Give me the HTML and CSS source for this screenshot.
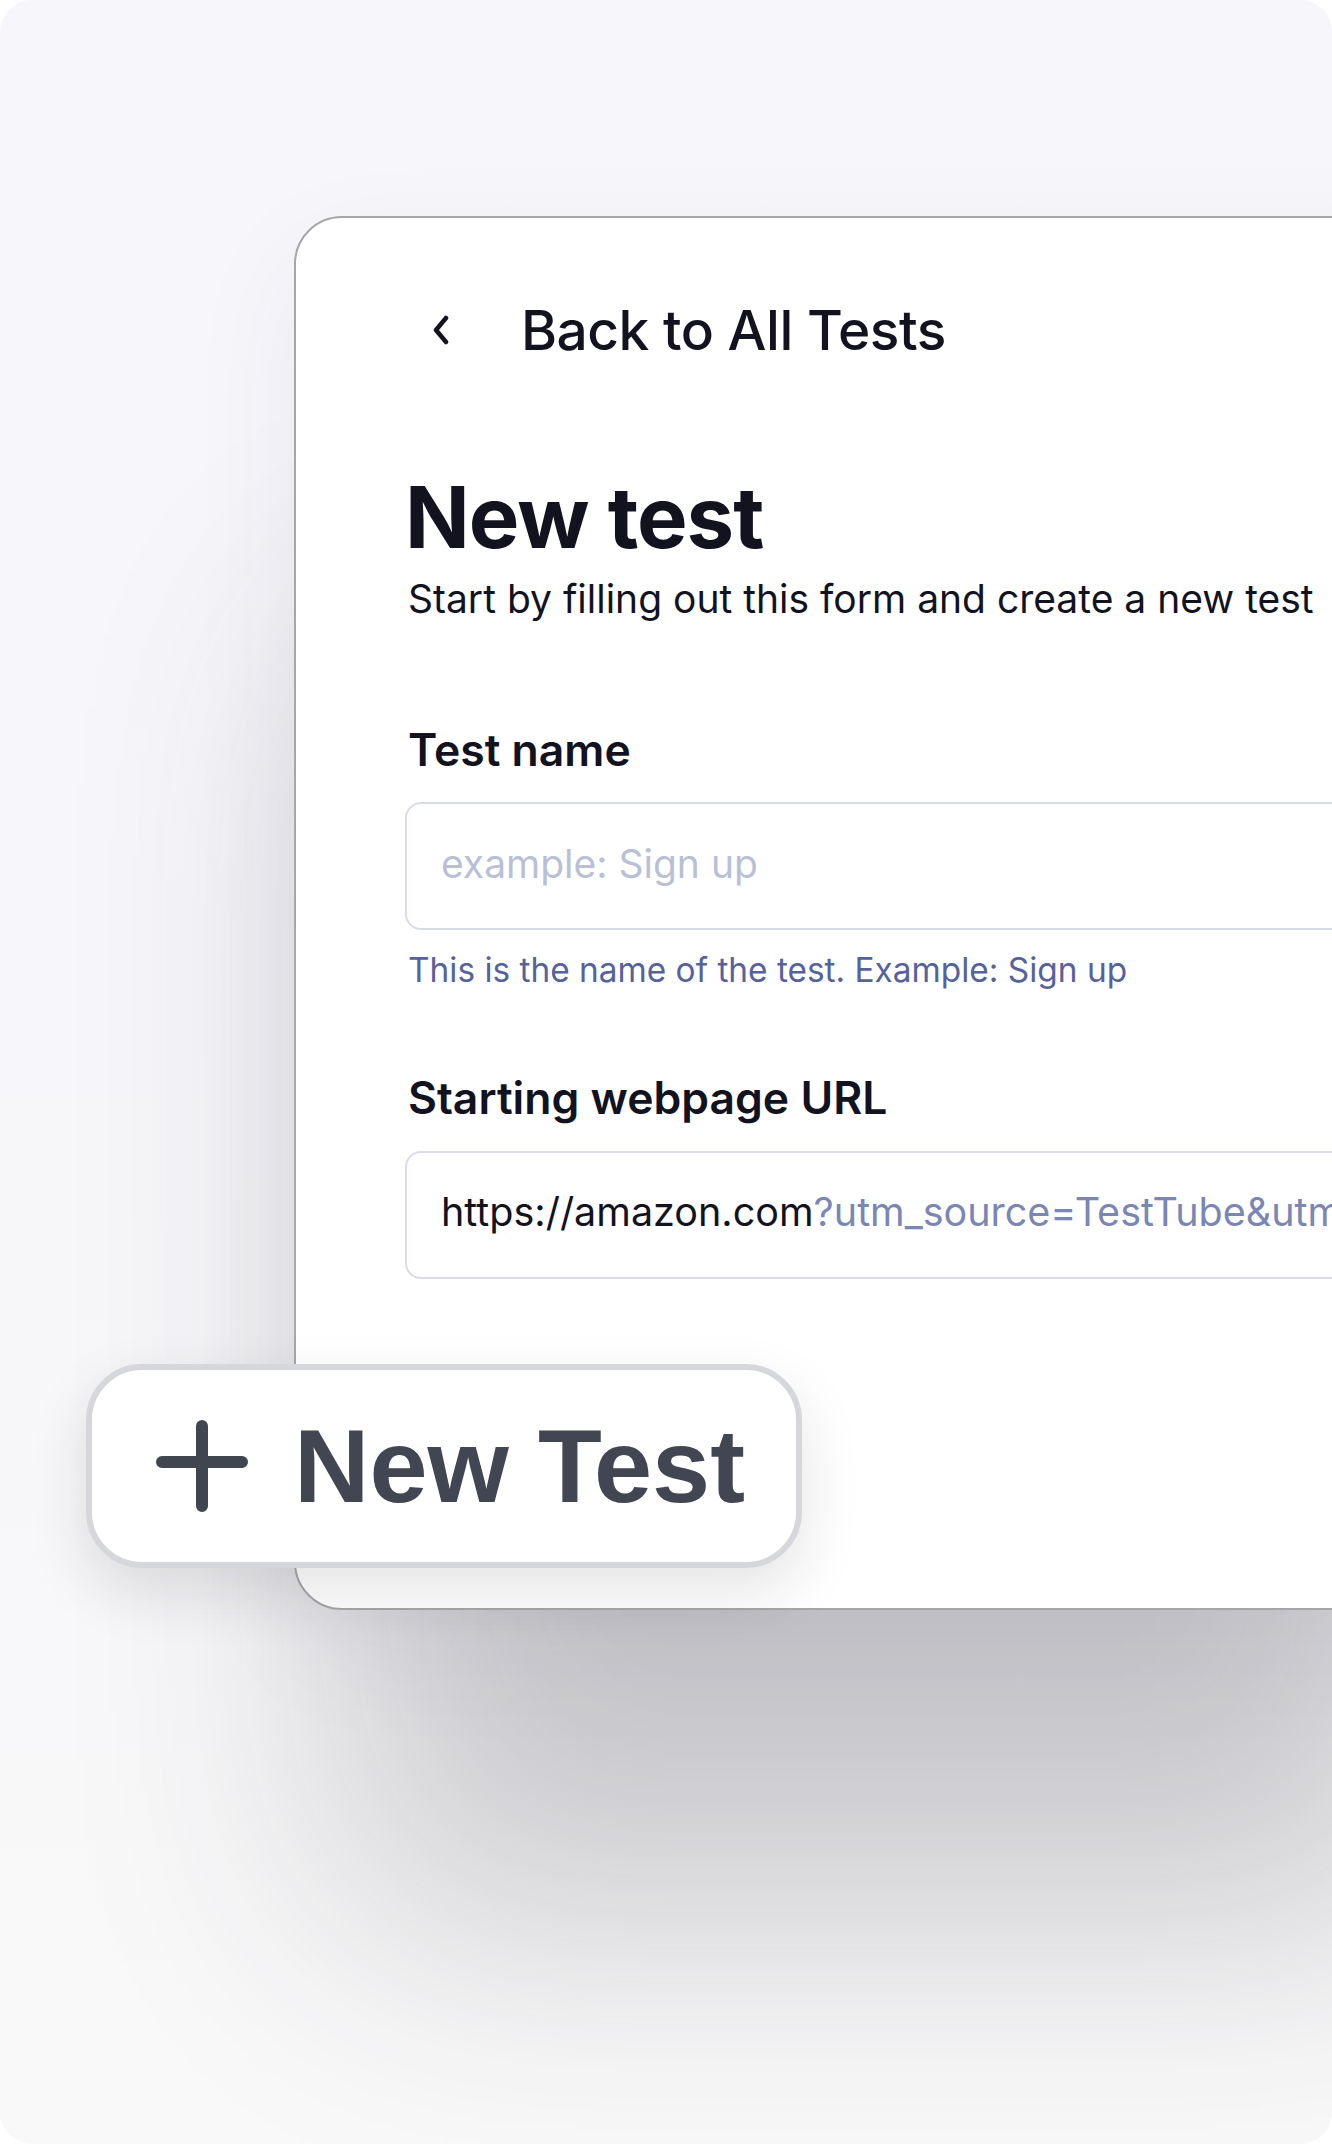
FILE: index.html
```html
<!DOCTYPE html>
<html lang="en">
<head>
<meta charset="UTF-8">
<meta name="viewport" content="width=device-width, initial-scale=1.0">
<title>New test</title>
<link rel="stylesheet" href="styles.css">
</head>
<body>
  <div class="page">
    <div class="window">
      <a class="back-link" href="#">
        <svg class="chevron" width="18" height="30" viewBox="0 0 18 30">
          <path d="M14 3 L4 15 L14 27" fill="none" stroke="#12131f" stroke-width="4.5" stroke-linecap="round" stroke-linejoin="round"/>
        </svg>
        <span>Back to All Tests</span>
      </a>

      <div class="heading">
        <h1>New test</h1>
        <p class="subtitle">Start by filling out this form and create a new test</p>
      </div>

      <form class="test-form">
        <div class="field">
          <label for="test-name">Test name</label>
          <div class="input-box">
            <input id="test-name" type="text" placeholder="example: Sign up">
          </div>
          <div class="hint">This is the name of the test. Example: Sign up</div>
        </div>

        <div class="field">
          <label>Starting webpage URL</label>
          <div class="input-box">
            <span class="url">https://amazon.com<span class="query">?utm_source=TestTube&amp;utm_medium=referral</span></span>
          </div>
        </div>
      </form>
    </div>

    <button class="new-test-btn" type="button">
      <svg class="plus" width="92" height="92" viewBox="0 0 92 92">
        <path d="M46 6 V86 M6 42 H86" fill="none" stroke="#414550" stroke-width="12" stroke-linecap="round"/>
      </svg>
      <span>New Test</span>
    </button>
  </div>
</body>
</html>
```

FILE: styles.css
```css
  body {
    margin: 0;
    padding: 0;
    background: #ffffff;
    font-family: Inter, 'Noto Sans', sans-serif;
    color: #12131f;
  }

  .page {
    position: relative;
    width: 1332px;
    height: 2144px;
    border-radius: 32px;
    overflow: hidden;
    background: linear-gradient(180deg, #f6f6fb 0%, #f7f7fa 60%, #f9f9f9 100%);
    padding-top: 216px;
    padding-left: 294px;
    box-sizing: border-box;
  }

  .window {
    width: 1200px;
    height: 1394px;
    box-sizing: border-box;
    background: #ffffff;
    border: 2px solid #a6a6a8;
    border-radius: 48px;
    padding: 72px 0 0 112px;
    box-shadow: 0 360px 320px -60px rgba(40, 40, 55, 0.24),
                0 40px 120px rgba(40, 40, 60, 0.06);
  }

  .back-link {
    display: flex;
    align-items: center;
    gap: 71px;
    padding-left: 24px;
    height: 80px;
    text-decoration: none;
    color: #12131f;
    font-size: 55px;
    font-weight: 500;
    letter-spacing: -0.5px;
  }

  .heading {
    margin-top: 105px;
  }

  .heading h1 {
    margin: 0 0 0 -3px;
    font-size: 85px;
    font-weight: 700;
    line-height: 1;
    letter-spacing: -1px;
  }

  .subtitle {
    margin: 16px 0 0;
    font-size: 39px;
    line-height: 1.2;
  }

  .test-form {
    margin-top: 101px;
    display: flex;
    flex-direction: column;
    gap: 82px;
  }

  .field label {
    display: block;
    font-size: 44.5px;
    font-weight: 600;
    line-height: 1.2;
    margin-bottom: 25px;
  }

  .input-box {
    margin-left: -3px;
    width: 1100px;
    height: 128px;
    box-sizing: border-box;
    border: 2px solid #d9dce8;
    border-radius: 16px;
    display: flex;
    align-items: center;
    padding: 0 0 5px 34px;
    overflow: hidden;
  }

  .input-box input {
    border: none;
    outline: none;
    width: 100%;
    font-family: inherit;
    font-size: 39px;
    color: #12131f;
    padding: 0;
  }

  .input-box input::placeholder {
    color: #b9bfd6;
  }

  .url {
    font-size: 39.5px;
    white-space: nowrap;
    color: #12131f;
  }

  .url .query {
    color: #7a86b4;
  }

  .hint {
    margin-top: 20px;
    font-size: 33.4px;
    color: #56629a;
  }

  .new-test-btn {
    position: absolute;
    left: 86px;
    top: 1364px;
    width: 716px;
    height: 204px;
    box-sizing: border-box;
    background: #ffffff;
    border: 6px solid #d6d7db;
    border-radius: 56px;
    display: flex;
    align-items: center;
    padding: 0 0 0 64px;
    gap: 46px;
    font-family: 'Liberation Sans', Arial, sans-serif;
    font-size: 104.5px;
    font-weight: 700;
    color: #424652;
    box-shadow: 0 24px 60px rgba(30, 30, 40, 0.12);
    cursor: pointer;
  }
```
